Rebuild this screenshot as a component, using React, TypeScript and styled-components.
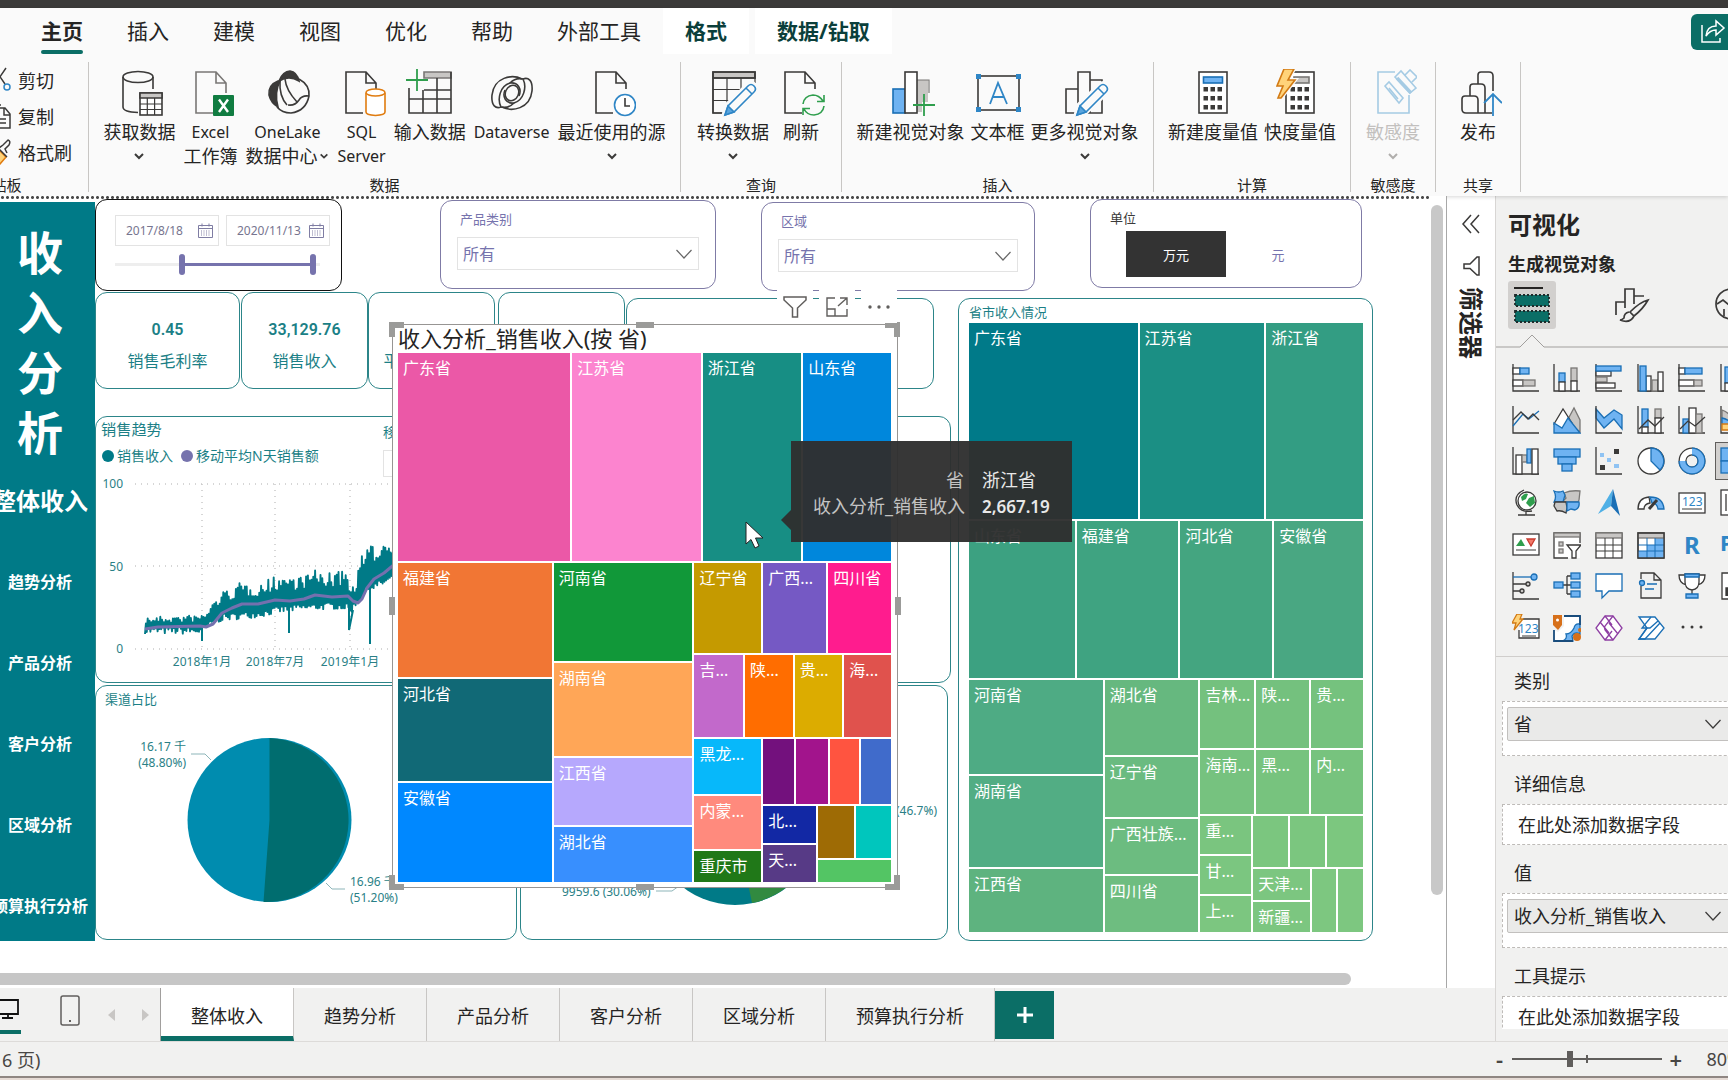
import React from "react";
import styled, { createGlobalStyle } from "styled-components";

const K = "#3b3a39";
const BF = "#6fb3f2";
const BS = "#1a6fb5";
const GF = "#c8c6c4";
const GS = "#797775";
const ACCENT = "#0b6e66";
const TEAL = "#007a87";
const LINE = "#2c8589";
const PURPLE = "#7673ad";

const Global = createGlobalStyle`
  * { box-sizing: border-box; }
  body {
    margin: 0;
    overflow: hidden;
    font-family: "Noto Sans", "Noto Sans CJK SC", sans-serif;
    color: #252423;
    background: #fff;
  }
  button, input, select { font: inherit; color: inherit; border: 0; padding: 0; margin: 0; background: none; border-radius: 0; }
  svg { display: block; flex: none; }
  p, h1, h2, h3 { margin: 0; font-weight: 400; }
`;

/* ---------- shell ---------- */
const Shell = styled.div`
  height: 100vh;
  display: flex;
  flex-direction: column;
`;
const TitleStrip = styled.div`
  height: 8px;
  background: #3b3a39;
  flex: none;
`;
const Header = styled.header`
  background: #fafafa;
  flex: none;
  position: relative;
  box-shadow: 0 1px 4px rgba(0, 0, 0, 0.16);
`;
const Menu = styled.nav`
  height: 46px;
  display: flex;
  padding-left: 19px;
`;
const MenuTab = styled.button<{ $on?: boolean; $ctx?: boolean }>`
  position: relative;
  padding: 0 22px;
  font-size: 21px;
  line-height: 46px;
  white-space: nowrap;
  font-weight: ${(p) => (p.$on || p.$ctx ? 700 : 400)};
  color: ${(p) => (p.$ctx ? "#0b3f3b" : "#252423")};
  background: ${(p) => (p.$ctx ? "#fff" : "none")};
  margin-right: ${(p) => (p.$ctx ? 6 : 0)}px;
  &::after {
    content: "";
    display: ${(p) => (p.$on ? "block" : "none")};
    position: absolute;
    left: 22px;
    right: 22px;
    bottom: 0;
    height: 4px;
    border-radius: 2px;
    background: ${ACCENT};
  }
`;
const ShareButton = styled.button`
  margin: 6px -8px 0 auto;
  width: 45px;
  height: 36px;
  padding-left: 9px;
  border-radius: 6px;
  background: ${ACCENT};
`;
const Ribbon = styled.div`
  height: 142px;
  display: flex;
  padding-top: 8px;
`;
const Group = styled.section<{ $w: number; $cut?: number }>`
  width: ${(p) => p.$w}px;
  margin-left: ${(p) => -(p.$cut || 0)}px;
  height: 130px;
  flex: none;
  display: flex;
  flex-direction: column;
  border-right: 1px solid #c8c6c4;
`;
const GroupBody = styled.div<{ $gap: number }>`
  flex: 1;
  display: flex;
  justify-content: center;
  align-items: flex-start;
  gap: ${(p) => p.$gap}px;
  padding-top: 7px;
`;
const GroupName = styled.h2`
  font-size: 15px;
  line-height: 20px;
  height: 17px;
  text-align: center;
`;
const Tool = styled.button<{ $off?: boolean }>`
  display: flex;
  flex-direction: column;
  align-items: center;
  white-space: nowrap;
  color: ${(p) => (p.$off ? "#c2c0be" : "#252423")};
  > svg { margin-bottom: 3px; }
`;
const ToolLine = styled.span<{ $latin?: boolean }>`
  display: flex;
  align-items: center;
  gap: 2px;
  font-size: ${(p) => (p.$latin ? 16 : 18)}px;
  line-height: 24px;
  height: 24px;
`;
const ClipList = styled.div`
  display: flex;
  flex-direction: column;
  padding: 0 0 0 75px;
  height: 113px;
`;
const ClipButton = styled.button`
  height: 36px;
  display: flex;
  align-items: center;
  gap: 7px;
  font-size: 18px;
  white-space: nowrap;
`;
const Body = styled.div`
  flex: 1;
  display: flex;
  min-height: 0;
`;
const LeftSide = styled.div`
  flex: 1;
  min-width: 0;
  display: flex;
  flex-direction: column;
`;
const Work = styled.div`
  flex: 1;
  min-height: 0;
  display: flex;
`;
const Canvas = styled.main`
  flex: 1;
  min-width: 0;
  position: relative;
  overflow: hidden;
  background: #fff;
  border-right: 1px solid #a8a8a8;
  display: flex;
  flex-direction: column;
`;
const SelectionDots = styled.div`
  height: 3px;
  flex: none;
  margin-right: 17px;
  background: radial-gradient(circle, #4a4a4a 0 1px, transparent 2px) 0 0 / 5px 3px repeat-x;
`;
const CanvasRow = styled.div`
  flex: 1;
  min-height: 0;
  display: flex;
  justify-content: space-between;
`;
const VScroll = styled.div`
  width: 12px;
  height: 690px;
  margin: 6px 3px 0 0;
  border-radius: 6px;
  background: #c8c8c8;
`;
const HScroll = styled.div`
  height: 12px;
  flex: none;
  margin: 0 95px 3px 0;
  border-radius: 0 6px 6px 0;
  background: #c6c6c6;
`;

/* ---------- report page ---------- */
const Report = styled.div`
  display: flex;
  margin-left: -15px;
`;
const SideNav = styled.nav`
  width: 110px;
  height: 739px;
  margin-top: 3px;
  background: ${TEAL};
  color: #fff;
  font-weight: 700;
  display: flex;
  flex-direction: column;
  align-items: center;
  padding-top: 20px;
`;
const SideTitle = styled.h1`
  width: 46px;
  font-size: 46px;
  line-height: 60px;
  font-weight: 700;
  margin-bottom: 18px;
`;
const SideLink = styled.a<{ $on?: boolean }>`
  color: #fff;
  text-decoration: none;
  white-space: nowrap;
  font-size: ${(p) => (p.$on ? 24 : 16)}px;
  line-height: 42px;
  margin-bottom: 39px;
`;
const Content = styled.div`
  display: flex;
  flex-direction: column;
`;
const Filters = styled.div`
  display: flex;
  align-items: flex-start;
  height: 93px;
`;
const Slicer = styled.div<{ $w: number; $h?: number; $gap?: number; $top?: number; $c?: string }>`
  width: ${(p) => p.$w}px;
  height: ${(p) => p.$h || 89}px;
  margin-left: ${(p) => p.$gap || 0}px;
  margin-top: ${(p) => p.$top || 0}px;
  border: 1px solid ${(p) => p.$c || "#7f7ba6"};
  border-radius: 12px;
  padding: 0 16px;
  background: #fff;
`;
const Dates = styled.div`
  display: flex;
  gap: 7px;
  padding: 15px 0 0 3px;
`;
const DateBox = styled.label`
  width: 104px;
  flex: none;
  height: 31px;
  border: 1px solid #e3e3e3;
  display: flex;
  align-items: center;
  justify-content: space-between;
  padding: 0 5px 0 10px;
  color: #77758f;
  font-size: 12px;
  input { width: 68px; line-height: 20px; }
`;
const RangePair = styled.div`
  display: grid;
  width: 205px;
  margin: 8px 0 0 3px;
`;
const RangeInput = styled.input<{ $track?: boolean }>`
  grid-area: 1 / 1;
  appearance: none;
  width: 205px;
  height: 21px;
  pointer-events: none;
  background: ${(p) =>
    p.$track
      ? `linear-gradient(${PURPLE}, ${PURPLE}) 66px 9px / 132px 3px no-repeat, linear-gradient(#eeeeee, #eeeeee) 0 9px / 205px 3px no-repeat`
      : "none"};
  &::-webkit-slider-thumb {
    appearance: none;
    pointer-events: auto;
    width: 6px;
    height: 21px;
    border-radius: 3px;
    background: ${PURPLE};
  }
`;
const SlicerTitle = styled.label<{ $dark?: boolean }>`
  display: block;
  padding-left: 3px;
  margin-top: 8px;
  font-size: 13px;
  line-height: 20px;
  color: ${(p) => (p.$dark ? K : PURPLE)};
`;
const SelectBox = styled.div`
  display: flex;
  align-items: center;
  height: 33px;
  margin-top: 8px;
  border: 1px solid #e3e3e3;
  padding-right: 5px;
  select {
    appearance: none;
    flex: 1;
    height: 31px;
    padding-left: 5px;
    font-size: 16px;
    color: ${PURPLE};
  }
`;
const UnitButtons = styled.div`
  display: flex;
  padding: 3px 0 0 19px;
  gap: 2px;
`;
const UnitButton = styled.button<{ $on?: boolean }>`
  width: 100px;
  height: 46px;
  font-size: 13px;
  color: ${(p) => (p.$on ? "#fff" : PURPLE)};
  background: ${(p) => (p.$on ? "#333" : "none")};
`;
const Lower = styled.div`
  display: flex;
  gap: 7px;
`;
const LeftCol = styled.div`
  width: 856px;
`;
const Cards = styled.div`
  display: flex;
  align-items: flex-start;
  height: 124px;
`;
const Card = styled.div<{ $w: number; $gap?: number; $low?: boolean }>`
  width: ${(p) => p.$w}px;
  height: ${(p) => (p.$low ? 91 : 97)}px;
  margin-left: ${(p) => p.$gap || 0}px;
  margin-top: ${(p) => (p.$low ? 6 : 0)}px;
  border: 1px solid ${LINE};
  border-radius: 12px;
  color: #1b7f86;
  text-align: center;
  white-space: nowrap;
  padding-top: 25px;
`;
const CardValue = styled.p`
  font-size: 16px;
  line-height: 24px;
  height: 24px;
  font-weight: 600;
  font-family: "Roboto", "Noto Sans", sans-serif;
`;
const CardName = styled.p`
  font-size: 16px;
  line-height: 24px;
  margin-top: 7px;
`;
const Panel = styled.section<{ $w?: number; $h: number }>`
  width: ${(p) => (p.$w ? p.$w + "px" : "auto")};
  height: ${(p) => p.$h}px;
  border: 1px solid ${LINE};
  border-radius: 12px;
  overflow: hidden;
  color: #1b7f86;
`;
const PanelTitle = styled.h3`
  font-size: 13px;
  line-height: 20px;
  padding-left: 9px;
  padding-top: 3px;
  margin-bottom: 1px;
`;
const TrendHead = styled.div`
  display: flex;
  height: 57px;
  padding: 2px 5px 0;
`;
const TrendTitles = styled.div`
  width: 282px;
  font-size: 13px;
  line-height: 20px;
`;
const Legend = styled.div`
  display: flex;
  align-items: center;
  gap: 3px;
  margin-top: 6px;
  font-size: 14px;
  line-height: 22px;
  white-space: nowrap;
`;
const Dot = styled.i<{ $c: string; $next?: boolean }>`
  width: 12px;
  height: 12px;
  margin-left: ${(p) => (p.$next ? 5 : 1)}px;
  border-radius: 50%;
  background: ${(p) => p.$c};
`;
const WindowBox = styled.label`
  font-size: 13px;
  line-height: 26px;
  input { display: block; width: 120px; height: 27px; margin-top: 5px; border: 1px solid #e3e3e3; }
`;
const BottomRow = styled.div`
  display: flex;
  gap: 3px;
  margin-top: 2px;
`;
const ChartText = styled.text`
  font-size: 12px;
  fill: #2a7f86;
`;
const Province = styled(Panel)`
  margin-top: 6px;
  padding: 0 9px 8px 10px;
  display: flex;
  flex-direction: column;
`;
const ProvinceTitle = styled.h3`
  font-size: 13px;
  line-height: 20px;
  height: 24px;
  padding-top: 3px;
`;

/* ---------- treemap ---------- */
type Node = { s: number; t?: string; c?: string; d?: "row" | "column"; k?: Node[] };
const Split = styled.div<{ $d: string; $s: number }>`
  display: flex;
  flex-direction: ${(p) => p.$d};
  flex: ${(p) => p.$s} 1 0;
  gap: 2px;
  min-width: 0;
  min-height: 0;
`;
const Tile = styled.div<{ $s: number; $c: string }>`
  flex: ${(p) => p.$s} 1 0;
  min-width: 0;
  min-height: 0;
  text-indent: 5px;
  overflow: hidden;
  white-space: nowrap;
  font-size: 16px;
  line-height: 30px;
  color: #fff;
  background: ${(p) => p.$c};
`;
const Tree = ({ n }: { n: Node }) =>
  n.k ? (
    <Split $d={n.d || "row"} $s={n.s}>
      {n.k.map((c, i) => (
        <Tree key={i} n={c} />
      ))}
    </Split>
  ) : (
    <Tile $s={n.s} $c={n.c || "#ccc"}>
      {n.t}
    </Tile>
  );
const L = (s: number, c: string, t?: string): Node => ({ s, c, t });
const R = (s: number, k: Node[]): Node => ({ s, d: "row", k });
const C = (s: number, k: Node[]): Node => ({ s, d: "column", k });

const greenMap = C(1, [
  R(196, [L(169, "#007a89", "广东省"), L(125, "#1b8f84", "江苏省"), L(97, "#339d83", "浙江省")]),
  R(157, [L(106, "#3ca181", "山东省"), L(102, "#3fa381", "福建省"), L(92, "#44a580", "河北省"), L(89, "#49a782", "安徽省")]),
  R(252, [
    C(134, [L(94, "#4eab84", "河南省"), L(90, "#52ad84", "湖南省"), L(63, "#5eb37f", "江西省")]),
    C(94, [L(75, "#66b87f", "湖北省"), L(60, "#6abb80", "辽宁省"), L(55, "#6cbc80", "广西壮族..."), L(56, "#6ebd80", "四川省")]),
    C(163, [
      R(68, [L(54, "#74c17e", "吉林..."), L(53, "#74c17e", "陕..."), L(52, "#75c27e", "贵...")]),
      R(64, [L(54, "#76c27f", "海南..."), L(53, "#77c37e", "黑..."), L(52, "#77c37e", "内...")]),
      R(116, [
        C(51, [L(38, "#7ac57f", "重..."), L(38, "#7bc680", "甘..."), L(36, "#7cc680", "上...")]),
        C(110, [
          R(51, [L(35, "#7bc67f"), L(36, "#7bc67f"), L(36, "#7cc77f")]),
          R(63, [C(57, [L(31, "#7cc680", "天津..."), L(30, "#7cc680", "新疆...")]), L(25, "#7dc780"), L(25, "#7dc780")]),
        ]),
      ]),
    ]),
  ]),
]);

const colorMap = C(1, [
  R(208, [L(173, "#eb58a7", "广东省"), L(129, "#fc84cf", "江苏省"), L(99, "#178e84", "浙江省"), L(88, "#0087dc", "山东省")]),
  R(319, [
    C(154, [L(114, "#f17634", "福建省"), L(103, "#116976", "河北省"), L(99, "#0088ff", "安徽省")]),
    C(139, [L(98, "#119839", "河南省"), L(94, "#ffa657", "湖南省"), L(67, "#b6a8fd", "江西省"), L(55, "#388ffe", "湖北省")]),
    C(197, [
      R(91, [L(67, "#c59a00", "辽宁省"), L(63, "#7559c4", "广西..."), L(63, "#ff1c8e", "四川省")]),
      R(82, [L(49, "#c269cb", "吉..."), L(48, "#ff6d00", "陕..."), L(48, "#dcac00", "贵..."), L(47, "#e0524d", "海...")]),
      R(144, [
        C(67, [L(55, "#07b8fa", "黑龙..."), L(54, "#ff8a7d", "内蒙..."), L(31, "#207818", "重庆市")]),
        C(128, [
          R(66, [L(31, "#73117d"), L(31, "#a2148c"), L(29, "#ff5440"), L(30, "#406bcb")]),
          R(76, [
            C(53, [L(37, "#1228a4", "北..."), L(37, "#573a86", "天...")]),
            C(73, [R(52, [L(36, "#9e6b05"), L(35, "#00c6bd")]), L(22, "#53c564")]),
          ]),
        ]),
      ]),
    ]),
  ]),
]);

/* ---------- selected visual, its handles and tooltip ---------- */
const Selected = styled.section`
  position: absolute;
  left: 392px;
  top: 128px;
  width: 506px;
  height: 564px;
  display: flex;
  flex-direction: column;
  padding: 0 6px 5px 5px;
  background: #fff;
  border: 1px solid #979593;
`;
const SelectedTitle = styled.h2`
  font-size: 22px;
  line-height: 26px;
  height: 28px;
  white-space: nowrap;
`;
const Handle = styled.i<{ $x: string; $y: string }>`
  position: absolute;
  left: ${(p) => ({ l: "-4px", m: "calc(50% - 9px)", r: "calc(100% - 2px)" })[p.$x]};
  top: ${(p) => ({ t: "-3px", m: "calc(50% - 9px)", b: "calc(100% - 3px)" })[p.$y]};
  width: ${(p) => (p.$x === "m" ? 18 : 6)}px;
  height: ${(p) => (p.$y === "m" ? 18 : 6)}px;
  background: #9b9b99;
`;
const Corner = styled.i<{ $r?: boolean; $b?: boolean }>`
  position: absolute;
  width: 15px;
  height: 15px;
  ${(p) => (p.$r ? "right: -3px; border-right" : "left: -4px; border-left")}: 6px solid #9b9b99;
  ${(p) => (p.$b ? "bottom: -3px; border-bottom" : "top: -3px; border-top")}: 6px solid #9b9b99;
`;
const VisualTools = styled.div`
  position: absolute;
  right: 0;
  bottom: calc(100% + 2px);
  display: flex;
  gap: 6px;
`;
const VisualTool = styled.button`
  width: 36px;
  height: 33px;
  display: flex;
  align-items: center;
  justify-content: center;
  background: #fff;
`;
const Tooltip = styled.dl`
  position: absolute;
  left: 791px;
  top: 245px;
  width: 281px;
  height: 101px;
  margin: 0;
  padding: 26px 20px 0 22px;
  display: grid;
  grid-template-columns: 151px 1fr;
  column-gap: 18px;
  grid-auto-rows: 26px;
  align-content: start;
  font-size: 18px;
  line-height: 26px;
  white-space: nowrap;
  color: #e8e8e8;
  background: rgba(47, 47, 47, 0.96);
  &::before {
    content: "";
    position: absolute;
    left: -10px;
    top: 69px;
    border: 10px solid transparent;
    border-left: 0;
    border-right-color: rgba(47, 47, 47, 0.96);
  }
  dt { text-align: right; color: #c3c3c3; }
  dd { margin: 0; }
  dd b { font-size: 17px; font-weight: 600; }
`;
const Pointer = styled.svg`
  position: absolute;
  left: 744px;
  top: 325px;
`;

/* ---------- filters strip ---------- */
const FilterStrip = styled.aside`
  width: 48px;
  flex: none;
  display: flex;
  flex-direction: column;
  align-items: center;
  padding-top: 18px;
  background: #fff;
`;
const StripButton = styled.button`
  height: 42px;
  display: flex;
`;
const StripTitle = styled.h2`
  writing-mode: vertical-rl;
  text-orientation: sideways;
  font-size: 24px;
  line-height: 32px;
  font-weight: 700;
  margin-top: 11px;
`;

/* ---------- visualizations pane ---------- */
const Pane = styled.aside`
  width: 233px;
  flex: none;
  overflow: hidden;
  display: flex;
  flex-direction: column;
  background: #f1f1f0;
  border-left: 1px solid #d8d6d4;
  white-space: nowrap;
`;
const PaneTitle = styled.h2`
  font-size: 24px;
  line-height: 34px;
  font-weight: 700;
  margin: 12px 0 0 12px;
`;
const PaneSub = styled.h3`
  font-size: 18px;
  line-height: 26px;
  font-weight: 600;
  margin: 9px 0 4px 12px;
`;
const PaneTabs = styled.div`
  display: flex;
  gap: 52px;
  padding-left: 12px;
`;
const PaneTab = styled.button<{ $on?: boolean }>`
  width: 48px;
  height: 48px;
  flex: none;
  display: flex;
  align-items: center;
  justify-content: center;
  border-radius: 3px;
  background: ${(p) => (p.$on ? "#d2d0ce" : "none")};
`;
const VizGrid = styled.div`
  display: grid;
  width: 250px;
  height: 292px;
  grid-template-columns: repeat(6, 1fr);
  grid-template-rows: repeat(7, 1fr);
  margin: 8px 0 7px 9px;
  flex: none;
`;
const VizButton = styled.button<{ $on?: boolean }>`
  display: flex;
  align-items: center;
  justify-content: center;
  margin: 2px;
  border: 1px solid ${(p) => (p.$on ? "#605e5c" : "transparent")};
  background: ${(p) => (p.$on ? "#d2d0ce" : "none")};
`;
const Wells = styled.div`
  border-top: 1px solid #d0cecc;
  padding: 12px 0 0 6px;
  flex: 1;
  min-height: 0;
  overflow: hidden;
  margin-bottom: 12px;
`;
const WellName = styled.h3`
  font-size: 18px;
  line-height: 24px;
  margin: 0 0 8px 12px;
`;
const Well = styled.div<{ $full?: boolean }>`
  height: ${(p) => (p.$full ? 55 : 41)}px;
  width: 260px;
  margin-bottom: 16px;
  padding: ${(p) => (p.$full ? "5px 4px" : "6px 15px")};
  font-size: 18px;
  line-height: 28px;
  background: #fff;
  border: 1px dashed #bebbb8;
`;
const Chip = styled.div`
  height: 34px;
  display: flex;
  align-items: center;
  justify-content: space-between;
  padding: 0 34px 0 6px;
  border: 1px solid #c2c0be;
  border-radius: 2px;
  background: #eaeae9;
`;

/* ---------- page tabs + status ---------- */
const PageBar = styled.nav`
  height: 53px;
  flex: none;
  display: flex;
  background: #f1f1f0;
`;
const ViewButton = styled.button<{ $on?: boolean }>`
  width: ${(p) => (p.$on ? 21 : 24)}px;
  margin-right: ${(p) => (p.$on ? 37 : 13)}px;
  height: 46px;
  display: flex;
  justify-content: center;
  padding-top: 7px;
  border-bottom: ${(p) => (p.$on ? "4px solid " + ACCENT : "0")};
`;
const Step = styled.button`
  width: 33px;
  height: 53px;
  display: flex;
  align-items: center;
  justify-content: center;
`;
const PageTab = styled.button<{ $on?: boolean }>`
  padding: ${(p) => (p.$on ? "5px" : "0")} 30px 0;
  font-size: 18px;
  white-space: nowrap;
  border-right: 1px solid #c8c6c4;
  border-bottom: ${(p) => (p.$on ? "5px solid " + ACCENT : "0")};
  background: ${(p) => (p.$on ? "#fff" : "none")};
  box-shadow: ${(p) => (p.$on ? "-1px 0 #a19f9d" : "none")};
`;
const AddPage = styled.button`
  width: 59px;
  height: 48px;
  margin-top: 3px;
  display: flex;
  align-items: center;
  justify-content: center;
  background: ${ACCENT};
`;
const Status = styled.footer`
  height: 39px;
  flex: none;
  display: flex;
  align-items: center;
  justify-content: space-between;
  padding: 0 0 5px 2px;
  font-size: 18px;
  color: #484644;
  overflow: hidden;
  background: linear-gradient(#8f8682, #8f8682) 0 34px / 100% 2px no-repeat, linear-gradient(#e6dbd5, #e6dbd5) 0 36px / 100% 3px no-repeat, #f1f1f0;
  border-top: 1px solid #dddbd9;
`;
const Zoom = styled.div`
  display: flex;
  align-items: center;
  margin-right: -14px;
  gap: 7px;
`;
const ZoomButton = styled.button`
  font-size: 22px;
  line-height: 24px;
  width: 12px;
  font-weight: 600;
`;
const ZoomRange = styled.input`
  appearance: none;
  width: 150px;
  height: 18px;
  background: linear-gradient(#605e5c, #605e5c) 0 8px / 150px 2px no-repeat, linear-gradient(#605e5c, #605e5c) 74px 5px / 2px 8px no-repeat;
  &::-webkit-slider-thumb { appearance: none; width: 6px; height: 16px; background: #605e5c; }
`;
const ZoomText = styled.span`
  margin-left: 18px;
`;

/* ---------- drawings ---------- */
const Chev = ({ s = 12, c = K, w = 2 }: { s?: number; c?: string; w?: number }) => (
  <svg width={s} height={s} viewBox="0 0 12 12" fill="none" stroke={c} strokeWidth={w}>
    <path d="M2 4l4 4 4-4" />
  </svg>
);
const WideChev = ({ c = "#666" }: { c?: string }) => (
  <svg width="18" height="12" viewBox="0 0 18 12" fill="none" stroke={c} strokeWidth="1.2">
    <path d="M1.500 2l7.500 8 7.500-8" />
  </svg>
);
const Ico = ({ children, size = 48 }: { children: React.ReactNode; size?: number }) => (
  <svg width={size} height={size} viewBox={`0 0 ${size} ${size}`} fill="none" stroke={K} strokeWidth="1.6">
    {children}
  </svg>
);
const Doc = ({ c = K }: { c?: string }) => (
  <path d="M25 44H8V3H28L38 14V20M28 3V14H38" stroke={c} fill="none" />
);
const Pencil = () => (
  <g>
    <path d="M15 47L17 37L39 16Q43 13 46 17Q49 20 45 24L24 44Z" fill="#fafafa" stroke="#fafafa" strokeWidth="5" />
    <path d="M16 46L19 37L39 17Q42 14 45 17Q48 20 45 23L25 43ZM37 19L43 25" stroke="#2f86c6" fill="#fafafa" />
    <path d="M16 46L19 37L25 43Z" fill="#5aa5de" stroke="#2f86c6" />
  </g>
);
const CalcDots = ({ x, y }: { x: number; y: number }) => (
  <g fill={K} stroke="none">
    {[0, 1, 2].map((r) => [0, 1, 2].map((c) => <rect key={`${r}${c}`} x={x + c * 7} y={y + r * 9} width="4.500" height="4.500" />))}
  </g>
);
const BOLT = "M8 0H18L12 11H19L5 29H2L7 17H1Z";

const icons: Record<string, React.ReactNode> = {
  getData: (
    <Ico>
      <ellipse cx="23" cy="8" rx="15" ry="5.500" />
      <path d="M8 8V38Q8 43 23 43.500M38 8V20" />
      <rect x="25" y="24" width="22" height="22" fill="#fff" />
      <path d="M25 24H47V29H25Z" fill={GF} />
      <path d="M25 35H47M25 40.500H47M32.300 29V46M39.600 29V46" strokeWidth="1.200" />
    </Ico>
  ),
  excel: (
    <Ico>
      <path d="M27 44H10V3H30L40 14V24M30 3V14H40" stroke={GS} />
      <rect x="27" y="26" width="21" height="21" rx="1" fill="#107c41" stroke="none" />
      <path d="M33 30.500L42 43M42 30.500L33 43" stroke="#fff" strokeWidth="2.400" />
    </Ico>
  ),
  onelake: (
    <Ico>
      <path d="M16 12Q20 2 27 2Q34 3 36 12Q26 6 16 12Z" fill={K} />
      <path d="M15 12Q5 16 6 26Q8 34 15 38Q11 24 17 12Z" fill={K} />
      <path d="M36 10Q47 16 46 27Q43 42 28 44Q19 44 14 38M17 12Q16 27 24 36M22 10Q23 21 34 33M46 27Q39 26 36 31Q32 37 25 36" />
    </Ico>
  ),
  sql: (
    <Ico>
      <Doc />
      <path d="M28 24V43Q28 46 37.500 46.500Q47 46 47 43V24" fill="#fff" stroke="#e07c10" />
      <ellipse cx="37.500" cy="23.500" rx="9.500" ry="3.500" fill="#fff" stroke="#e07c10" />
    </Ico>
  ),
  table: (
    <Ico>
      <path d="M18 3H45V9H18Z" fill={GF} stroke={GS} />
      <path d="M3 19V44H45V3M3 30H45M18 21H45M17 21V44M31 9V44" />
      <path d="M11 0V22M0 11H22" stroke="#2f9e4d" strokeWidth="1.800" />
    </Ico>
  ),
  dataverse: (
    <Ico>
      <path d="M34 10C24 5 6 8 4 26C3 37 8 40 13 38C9 30 12 17 22 14C30 13 34 20 31 27" />
      <path d="M14 38C24 43 42 40 44 22C45 11 40 8 35 10C39 18 36 31 26 34C18 35 14 28 17 21" />
      <path d="M13 38C17 39 22 38 26 34M35 10C31 9 26 10 22 14" />
      <ellipse cx="24" cy="24" rx="6.500" ry="8" transform="rotate(25 24 24)" />
    </Ico>
  ),
  recent: (
    <Ico>
      <Doc />
      <circle cx="37" cy="36" r="10.500" fill="#fff" stroke="#2f86c6" />
      <path d="M37 29V37H42" stroke={K} />
    </Ico>
  ),
  transform: (
    <Ico>
      <path d="M4 3H46V9H4Z" fill={GF} />
      <path d="M4 9V44H18M46 9V14M4 20.500H34M4 31.500H24M18 9V36M32 9V22" strokeWidth="1.200" />
      <path d="M4 3H46V9H4ZM4 9V44H18" />
      <Pencil />
    </Ico>
  ),
  refresh: (
    <Ico>
      <Doc />
      <path d="M26 35Q27 27 36 26Q42 26 46 32M47 26V32.500H40M47 37Q46 45 37 46Q30 46 27 40M26 46V39.500H33" stroke="#2f9e4d" />
    </Ico>
  ),
  newVisual: (
    <Ico>
      <rect x="30" y="11" width="11" height="22" fill={GF} stroke="none" />
      <rect x="30" y="11" width="5" height="32" fill={GF} stroke="none" />
      <path d="M30 11H42V24" stroke={GS} strokeWidth="1.200" />
      <rect x="6" y="20" width="12" height="24" fill={BF} stroke={BS} />
      <rect x="18" y="3" width="12" height="41" fill="#fff" />
      <path d="M37 25V47M26 36H48" stroke="#2f9e4d" strokeWidth="1.800" />
    </Ico>
  ),
  textbox: (
    <Ico>
      <rect x="4" y="7" width="41" height="34" />
      <path d="M16 35L24 14L33 35M19 28H30" stroke="#2f86c6" strokeWidth="1.800" />
      <g fill="#2f86c6" stroke="none">
        <rect x="2" y="5" width="5" height="5" />
        <rect x="42" y="5" width="5" height="5" />
        <rect x="2" y="38" width="5" height="5" />
        <rect x="42" y="38" width="5" height="5" />
      </g>
    </Ico>
  ),
  moreVisual: (
    <Ico>
      <path d="M5 20H17V44H5ZM17 3H29V44H17ZM29 11H41V44H29" />
      <Pencil />
    </Ico>
  ),
  calc: (
    <Ico>
      <rect x="10" y="3" width="28" height="41" fill="#fff" />
      <rect x="14.500" y="8" width="19" height="6" fill={BF} stroke={BS} />
      <CalcDots x={14.500} y={18} />
    </Ico>
  ),
  quick: (
    <Ico>
      <rect x="10" y="3" width="28" height="41" fill="#fff" />
      <rect x="18" y="8" width="15" height="6" fill={GF} stroke={GS} />
      <CalcDots x={14.500} y={18} />
      <path d={BOLT} fill="#ffd37a" stroke="#fafafa" strokeWidth="4" />
      <path d={BOLT} fill="#ffd37a" stroke="#d27a14" />
    </Ico>
  ),
  sensitivity: (
    <Ico>
      <g stroke="#a5cbe4">
        <path d="M26 3H9V44H40V26" />
        <path d="M16 17L20 13L34 29L30 34ZM20 19L29 30" fill="#fafafa" />
        <path d="M26 8L32 2L47 19L41 24ZM36 6L41 1L48 8L43 13" fill="#fafafa" />
        <path d="M28 9L42 24" strokeWidth="3.500" />
      </g>
    </Ico>
  ),
  publish: (
    <Ico>
      <path d="M31 44H12Q8 44 8 40V30Q8 27 11 27H20Q24 27 24 31V44M16 27V18Q16 15 19 15H27Q31 15 31 19V44M24 15V6Q24 3 27 3H35Q39 3 39 7V22M31 44H38" />
      <path d="M39 47V25M30 34L39 25L48 34" stroke="#2f86c6" strokeWidth="1.800" />
    </Ico>
  ),
};

const Axis = () => <path d="M1 0V27H27" />;
const Rb = ({ a, c = "w" }: { a: number[]; c?: string }) => (
  <rect
    x={a[0]}
    y={a[1]}
    width={a[2]}
    height={a[3]}
    fill={c === "b" ? BF : c === "g" ? GF : "#fff"}
    stroke={c === "b" ? BS : c === "g" ? GS : K}
  />
);
const viz: [string, React.ReactNode][] = [
  ["堆积条形图", <><Axis /><Rb a={[1, 4, 7, 6]} /><Rb c="b" a={[8, 4, 9, 6]} /><Rb a={[1, 16, 10, 6]} /><Rb c="g" a={[11, 16, 12, 6]} /></>],
  ["堆积柱形图", <><Axis /><Rb c="b" a={[6, 9, 6, 9]} /><Rb a={[6, 18, 6, 9]} /><Rb c="g" a={[18, 4, 6, 13]} /><Rb a={[18, 17, 6, 10]} /></>],
  ["簇状条形图", <><Axis /><Rb a={[1, 7, 15, 5]} /><Rb c="g" a={[1, 13, 11, 5]} /><Rb a={[1, 19, 19, 5]} /><Rb c="b" a={[1, 2, 25, 5]} /></>],
  ["簇状柱形图", <><Axis /><Rb a={[9, 12, 5, 15]} /><Rb c="g" a={[15, 16, 6, 11]} /><Rb a={[21, 8, 5, 19]} /><Rb c="b" a={[3, 2, 6, 25]} /></>],
  ["百分比堆积条形图", <><Axis /><Rb a={[1, 4, 6, 6]} /><Rb c="b" a={[7, 4, 17, 6]} /><Rb a={[1, 16, 15, 6]} /><Rb c="g" a={[16, 16, 8, 6]} /></>],
  ["百分比堆积柱形图", <><Axis /><Rb c="b" a={[5, 3, 6, 16]} /><Rb a={[5, 19, 6, 8]} /></>],
  ["折线图", <><Axis /><path d="M1 20L11 8L17 13L27 5" stroke={BS} /><path d="M1 14L9 6L16 13L21 8L27 14" /></>],
  ["分区图", <><path d="M14 15L21 2L27 14V26Z" fill={GF} stroke={GS} /><path d="M1 18L10 3L19 17L9 24Z" fill="#fff" /><path d="M1 17L9 22L15 12L27 27H1Z" fill={BF} stroke={BS} /></>],
  ["堆积面积图", <><path d="M1 3L9 12L19 4L27 9V23L19 13L9 22L1 12Z" fill={BF} stroke={BS} /><Axis /></>],
  ["折线和堆积柱形图", <><Axis /><Rb c="b" a={[5, 3, 6, 18]} /><Rb a={[5, 21, 6, 6]} /><Rb c="g" a={[18, 3, 6, 9]} /><Rb a={[18, 12, 6, 15]} /><path d="M2 23L11 14L18 20L27 11" /></>],
  ["折线和簇状柱形图", <><Axis /><Rb c="b" a={[5, 13, 6, 14]} /><Rb a={[11, 2, 7, 25]} /><Rb c="g" a={[18, 8, 6, 19]} /><path d="M2 23L10 15L17 20L27 11" /></>],
  ["功能区图", <><Axis /><path d="M2 4Q8 6 12 12L27 8V16L12 18Q6 16 2 14Z" fill={GF} stroke={GS} /><path d="M2 12Q8 13 12 18L27 14V20L12 22L2 18Z" fill={BF} stroke={BS} /><path d="M2 18H12V24H2Z" fill="#ffd37a" stroke="#d27a14" /></>],
  ["瀑布图", <><Axis /><Rb a={[4, 8, 6, 19]} /><Rb c="g" a={[10, 8, 5, 7]} /><Rb c="b" a={[15, 2, 4, 14]} /><Rb a={[20, 2, 6, 25]} /></>],
  ["漏斗图", <><Rb c="b" a={[1, 2, 26, 8]} /><Rb c="b" a={[5, 10, 18, 7]} /><Rb c="b" a={[9, 17, 10, 7]} /></>],
  ["散点图", <><Axis /><g stroke="none"><path d="M19 2h5v5h-5zM5 18h5v5h-5z" fill={K} /><path d="M5 6h4v4h-4zM12 11h4v4h-4zM19 17h5v4h-5z" fill="#8fc3f3" /></g></>],
  ["饼图", <><circle cx="14" cy="14" r="13" fill="#fff" /><path d="M14 1A13 13 0 0 1 23 23L14 14Z" fill={BF} stroke={BS} /></>],
  ["环形图", <><circle cx="14" cy="14" r="9.500" stroke={K} strokeWidth="8" /><circle cx="14" cy="14" r="9.500" stroke="#fff" strokeWidth="5.500" /><path d="M14 4.500A9.500 9.500 0 1 1 4.500 14" stroke={BS} strokeWidth="8" /><path d="M14 4.500A9.500 9.500 0 1 1 4.500 14" stroke={BF} strokeWidth="5.500" /></>],
  ["树状图", <><Rb c="b" a={[1, 1, 12, 13]} /><Rb c="b" a={[1, 14, 12, 12]} /><Rb a={[13, 1, 13, 25]} /></>],
  ["地图", <><circle cx="15" cy="12" r="9" fill="#fff" /><path d="M9 8Q13 3 16 5L14 10L10 12ZM17 9L22 7L23 14L18 18L14 14Z" fill="#2f9e4d" stroke="none" /><path d="M12 1Q1 6 5 16Q9 24 20 22M14 22V26M6 26H23" /></>],
  ["着色地图", <><path d="M11 4Q18 1 27 2L26 11L25 13H12L10 12L13 9Z" fill={GF} stroke={GS} /><path d="M1 2Q6 4 10 2L12 6L10 13H1Q4 8 1 2Z" fill={BF} stroke={BS} /><path d="M2 13H13L14 19L13 24Q8 21 4 22L1 17Z" fill={GF} stroke={K} /><path d="M14 13H26Q27 19 22 21L18 20L14 22Z" fill={BF} stroke={BS} /></>],
  ["Azure 地图", <g stroke="none"><path d="M18 0L3 25L16 17Z" fill="#4fb0e6" /><path d="M18 0L16 17L25 27Z" fill="#1a6fb5" /></g>],
  ["仪表", <><path d="M1 20Q1 9 12 8L13 14Q7 15 7 20Z" fill="#fff" /><path d="M13 8Q26 8 27 20H21Q20 14 15 14Z" fill={BF} stroke={BS} /><path d="M12 20L20 11" strokeWidth="3" /></>],
  ["卡片图", <><rect x="1" y="4" width="26" height="20" fill="#fff" /><text x="4" y="17" fontSize="12" fill="#2f86c6" stroke="none">123</text><path d="M4 20H24" strokeWidth="1" /></>],
  ["多行卡", <><rect x="1" y="1" width="26" height="25" fill="#fff" /><path d="M6 5V22" /></>],
  ["KPI", <><rect x="1" y="3" width="26" height="21" fill="#fff" /><path d="M4 15L9 8L13 15Z" fill="#2f9e4d" stroke="none" /><path d="M15 8H23L19 15Z" fill="#f47a6a" stroke="#c83a2e" /><path d="M4 19H24" strokeWidth="1" /></>],
  ["切片器", <><rect x="1" y="2" width="26" height="25" fill="#fff" stroke="none" /><path d="M15 27H1V2H27V12" /><Rb c="g" a={[1, 2, 26, 4]} /><Rb c="g" a={[6, 11, 4, 4]} /><Rb c="g" a={[6, 18, 4, 4]} /><path d="M14 14H28L23 20V27H19V20Z" fill="#fff" /></>],
  ["表", <><rect x="1" y="2" width="26" height="25" fill="#fff" /><Rb c="g" a={[1, 2, 26, 5]} /><path d="M1 14H27M1 20H27M10 7V27M18 7V27" strokeWidth="1" /></>],
  ["矩阵", <><rect x="1" y="2" width="26" height="25" fill="#fff" /><path d="M1 20H10V14H18V7H27V27H1Z" fill={BF} stroke="none" /><Rb c="g" a={[1, 2, 26, 5]} /><path d="M1 14H27M1 20H27M10 7V27M18 7V27" stroke={BS} strokeWidth="1" /><path d="M1 2V27H27V2Z" /></>],
  ["R 脚本", <text x="6" y="23" fontSize="24" fontWeight="700" fill="#2f86c6" stroke="none">R</text>],
  ["Python", <text x="0" y="20" fontSize="22" fontWeight="700" fill="#2f86c6" stroke="none">Py</text>],
  ["关键影响者", <><Axis /><path d="M1 5H20" stroke={BS} /><circle cx="22" cy="5" r="3" fill={BF} stroke={BS} /><path d="M1 12H15M1 19H9" /><circle cx="16" cy="12" r="2" fill={GF} /><circle cx="10" cy="19" r="2" fill={GF} /></>],
  ["分解树", <><path d="M10 13H18M14 4V22M14 4H18M14 22H18" /><Rb c="b" a={[1, 10, 9, 6]} /><Rb c="b" a={[18, 1, 9, 6]} /><Rb c="b" a={[18, 10, 9, 6]} /><Rb c="b" a={[18, 19, 9, 6]} /></>],
  ["问答", <path d="M1 2H27V19H14L7 26V19H1Z" fill="#fff" stroke={BS} />],
  ["智能叙述", <><path d="M4 7V1H17L24 8V26H4V14M17 1V8H24" /><circle cx="5" cy="11" r="2.500" fill={BF} stroke={BS} /><path d="M10 12H20M8 17H17" stroke={BS} /></>],
  ["目标", <><path d="M7 2H21V10Q21 17 14 18Q7 17 7 10ZM7 3H1Q1 11 8 13M21 3H27Q27 11 20 13M14 18V22" fill="#fff" /><path d="M7 2H21V5H7ZM8 22H20V26H8Z" fill={BF} stroke={BS} /></>],
  ["分页报表", <><path d="M2 1H20V27H2Z" fill="#fff" /><path d="M6 24V16H10V24" fill={K} /></>],
  ["指标", <><path d="M11 5H27V24H7V16" fill="#fff" /><text x="6" y="19" fontSize="12" fill="#2f86c6" stroke="none">123</text><path d="M10 22H24" strokeWidth="1" /><path d="M5 0H10L8 5H11L2 16L4 9H0Z" fill="#ffd37a" stroke="#d27a14" /></>],
  ["ArcGIS", <><path d="M11 2H27V20Q22 17 19 22L20 27H1V16L5 18L11 12Z" fill="#fff" stroke="none" /><path d="M27 2V10Q22 9 21 14Q18 20 13 20Q15 25 9 27H20L19 22Q22 17 27 20V2Z" fill={BF} stroke={BS} /><path d="M11 2H27V11M20 27H1V16" stroke="#194c7c" strokeWidth="1.800" /><g fill="#d7701a" stroke="none"><path d="M0 1H9V11L5 16L0 11Z" /><circle cx="24" cy="23" r="4" /><circle cx="27" cy="16" r="2" /></g><circle cx="4.500" cy="6" r="1.500" fill="#fff" stroke="none" /></>],
  ["Power Apps", <><path d="M10 2H18L27 14L18 26H10L1 14Z" fill="#fff" stroke="#8e3fa3" /><path d="M18 2L10 12Q9 14 10 16L18 26M10 2L17 11M10 26L17 17M5 8L14 19M23 20L14 9" stroke="#8e3fa3" /></>],
  ["Power Automate", <><path d="M2 3H18L27 14L18 25H2L10 14Z" fill="#fff" stroke={BS} /><path d="M14 3L5 14H13L21 7M10 14L2 25H8L23 9" stroke={BS} /></>],
  ["更多", <g fill={K} stroke="none"><circle cx="5" cy="13" r="1.500" /><circle cx="14" cy="13" r="1.500" /><circle cx="23" cy="13" r="1.500" /></g>],
];

const Calendar = () => (
  <svg width="15" height="15" viewBox="0 0 15 15" fill="none" stroke="#7f7da3">
    <path d="M.5 2.500h14v12H.5zM.5 5.500h14M4 .5v3M11 .5v3" />
    <path d="M3 8h9M3 10h9M3 12h9" strokeDasharray="1 1.500" />
  </svg>
);
const Funnel = () => (
  <svg width="24" height="24" viewBox="0 0 24 24" fill="#fff" stroke="#605e5c" strokeWidth="1.500">
    <path d="M1 2H23V5L14.500 13V22H9.500V13L1 5Z" />
  </svg>
);

/* trend series: envelope [x, high, low] joined by a seeded zig-zag */
const env = [
  [145, 617, 634], [200, 615, 634], [206, 612, 631], [215, 599, 624], [222, 592, 621], [240, 583, 619], [260, 583, 617],
  [280, 574, 613], [300, 576, 611], [315, 570, 610], [335, 574, 609], [346, 567, 610], [351, 588, 614], [357, 578, 604],
  [360, 557, 602], [368, 548, 592], [378, 542, 588], [396, 532, 580],
];
const seriesPath = (() => {
  let seed = 7;
  const rnd = () => (seed = (seed * 16807) % 2147483647) / 2147483647;
  let d = "";
  for (let x = 145, i = 0; x < 396; x += 0.9, i++) {
    const j = env.findIndex((e) => e[0] > x);
    const a = env[Math.max(j - 1, 0)];
    const b = env[Math.max(j, 1)];
    const t = (x - a[0]) / (b[0] - a[0]);
    const hi = a[1] + (b[1] - a[1]) * t;
    const lo = a[2] + (b[2] - a[2]) * t;
    const reach = (lo - hi) / 2.4;
    const y = i % 2 ? hi + rnd() * reach : lo - rnd() * 7;
    d += `${i ? "L" : "M"}${x.toFixed(1)} ${y.toFixed(1)}`;
  }
  return d;
})();

const Trend = () => (
  <svg width="300" height="198" viewBox="96 474 300 198">
    <g stroke="#c9c9c9" strokeDasharray="1 5" strokeWidth="1.500">
      <path d="M135 484H396M135 566H396M135 649H396M202 484V649M275 484V649M350 484V649" />
    </g>
    <path d={seriesPath} fill="none" stroke={TEAL} strokeWidth="1.900" strokeLinejoin="round" />
    <path d="M202 622V641M289 605V633M349 600V630L353 610M370 580V644" fill="none" stroke={TEAL} strokeWidth="2" />
    <path d="M145 629L158 627L200 626L206 627L213 624L222 613L232 608L242 604L258 604L275 600L290 601L304 599L315 595L332 597L348 596L353 601L358 603L362 599L367 588L374 579L384 573L396 563" fill="none" stroke="#7470ae" strokeWidth="3" strokeLinejoin="round" />
    <g textAnchor="end">
      <ChartText x="123" y="488">100</ChartText>
      <ChartText x="123" y="571">50</ChartText>
      <ChartText x="123" y="653">0</ChartText>
    </g>
    <g textAnchor="middle">
      <ChartText x="202" y="666">2018年1月</ChartText>
      <ChartText x="275" y="666">2018年7月</ChartText>
      <ChartText x="350" y="666">2019年1月</ChartText>
    </g>
  </svg>
);
const ChannelPie = () => (
  <svg width="418" height="224" viewBox="96 710 418 224">
    <circle cx="269.500" cy="820" r="82" fill="#008caf" />
    <path d="M269.500 738A82 82 0 0 1 263.500 902L269.500 820Z" fill="#006d6f" />
    <path d="M191 754H205L211 760M326 883L332 889H345" fill="none" stroke="#8db5b9" />
    <g textAnchor="end">
      <ChartText x="186" y="751">16.17 千</ChartText>
      <ChartText x="186" y="767">(48.80%)</ChartText>
    </g>
    <ChartText x="350" y="886">16.96 千</ChartText>
    <ChartText x="350" y="902">(51.20%)</ChartText>
  </svg>
);
const RegionPie = () => (
  <svg width="425" height="248" viewBox="522 686 425 248">
    <circle cx="736" cy="820" r="85" fill={TEAL} />
    <path d="M736 820L753 903A85 85 0 0 0 821 820Z" fill="#318a40" />
    <path d="M657 891H673L680 886" fill="none" stroke="#8db5b9" />
    <ChartText x="563" y="896">9959.6 (30.06%)</ChartText>
    <ChartText x="897" y="815">(46.7%)</ChartText>
  </svg>
);

type ToolDef = { i: string; l: string[]; more?: boolean; off?: boolean };
const groups: { name: string; w: number; gap: number; tools: ToolDef[] }[] = [
  {
    name: "数据", w: 592, gap: 8,
    tools: [
      { i: "getData", l: ["获取数据"], more: true },
      { i: "excel", l: ["Excel", "工作簿"] },
      { i: "onelake", l: ["OneLake", "数据中心"], more: true },
      { i: "sql", l: ["SQL", "Server"] },
      { i: "table", l: ["输入数据"] },
      { i: "dataverse", l: ["Dataverse"] },
      { i: "recent", l: ["最近使用的源"], more: true },
    ],
  },
  { name: "查询", w: 161, gap: 8, tools: [{ i: "transform", l: ["转换数据"], more: true }, { i: "refresh", l: ["刷新"] }] },
  {
    name: "插入", w: 312, gap: 6,
    tools: [{ i: "newVisual", l: ["新建视觉对象"] }, { i: "textbox", l: ["文本框"] }, { i: "moreVisual", l: ["更多视觉对象"], more: true }],
  },
  { name: "计算", w: 197, gap: 6, tools: [{ i: "calc", l: ["新建度量值"] }, { i: "quick", l: ["快度量值"] }] },
  { name: "敏感度", w: 85, gap: 6, tools: [{ i: "sensitivity", l: ["敏感度"], more: true, off: true }] },
  { name: "共享", w: 85, gap: 6, tools: [{ i: "publish", l: ["发布"] }] },
];

const Clip = ({ children }: { children: React.ReactNode }) => (
  <svg width="26" height="26" viewBox="0 0 26 26" fill="none" stroke={K} strokeWidth="1.500">{children}</svg>
);

export default function App() {
  return (
    <Shell>
      <Global />
      <TitleStrip />
      <Header>
        <Menu>
          {["主页", "插入", "建模", "视图", "优化", "帮助", "外部工具"].map((t, i) => (
            <MenuTab key={t} $on={i === 0}>{t}</MenuTab>
          ))}
          {["格式", "数据/钻取"].map((t) => (
            <MenuTab key={t} $ctx>{t}</MenuTab>
          ))}
          <ShareButton aria-label="共享">
            <svg width="26" height="26" viewBox="0 0 26 26" fill="none" stroke="#fff" strokeWidth="1.500">
              <path d="M2 6V23H20V19M6 17Q7 7 16 7V2L24 9L16 16V11Q10 11 6 17Z" />
            </svg>
          </ShareButton>
        </Menu>
        <Ribbon>
          <Group $w={179} $cut={90}>
            <ClipList>
              <ClipButton>
                <Clip><path d="M9 1L20 17M21 1L10 17" /><circle cx="9" cy="20" r="3" stroke="#2f86c6" /><circle cx="22" cy="20" r="3" stroke="#2f86c6" /></Clip>
                剪切
              </ClipButton>
              <ClipButton>
                <Clip><path d="M9 5H20L25 11V25H9ZM19 5V12H25M13 16H21M13 20H21M9 20H3V2H16" /></Clip>
                复制
              </ClipButton>
              <ClipButton>
                <Clip><path d="M14 11L21 18L15 25L3 17Z" fill="#ffd37a" stroke="#e07c10" /><path d="M13 9L22 18M14 9L18 6L23 1Q26 2 24 6L20 10L22 14" /></Clip>
                格式刷
              </ClipButton>
            </ClipList>
            <GroupName>剪贴板</GroupName>
          </Group>
          {groups.map((g) => (
            <Group key={g.name} $w={g.w}>
              <GroupBody $gap={g.gap}>
                {g.tools.map((t) => (
                  <Tool key={t.i} $off={t.off}>
                    {icons[t.i]}
                    {t.l.map((x, i) => (
                      <ToolLine key={x} $latin={/^[A-Z]/.test(x)}>
                        {x}
                        {t.more && i === 1 && <Chev s={10} />}
                      </ToolLine>
                    ))}
                    {t.more && t.l.length === 1 && <ToolLine><Chev c={t.off ? "#b0aeac" : K} /></ToolLine>}
                  </Tool>
                ))}
              </GroupBody>
              <GroupName>{g.name}</GroupName>
            </Group>
          ))}
        </Ribbon>
      </Header>

      <Body>
        <LeftSide>
          <Work>
            <Canvas>
              <SelectionDots />
              <CanvasRow>
                <Report>
                  <SideNav>
                    <SideTitle>收入分析</SideTitle>
                    {["整体收入", "趋势分析", "产品分析", "客户分析", "区域分析", "预算执行分析"].map((t, i) => (
                      <SideLink key={t} href="#" $on={i === 0}>{t}</SideLink>
                    ))}
                  </SideNav>
                  <Content>
                    <Filters>
                      <Slicer $w={247} $h={92} $c="#111">
                        <Dates>
                          <DateBox><input aria-label="开始日期" defaultValue="2017/8/18" /><Calendar /></DateBox>
                          <DateBox><input aria-label="结束日期" defaultValue="2020/11/13" /><Calendar /></DateBox>
                        </Dates>
                        <RangePair>
                          <RangeInput $track type="range" aria-label="开始" defaultValue={32} />
                          <RangeInput type="range" aria-label="结束" defaultValue={98} />
                        </RangePair>
                      </Slicer>
                      <Slicer $w={276} $gap={98} $top={1}>
                        <SlicerTitle htmlFor="cat">产品类别</SlicerTitle>
                        <SelectBox><select id="cat"><option>所有</option></select><WideChev /></SelectBox>
                      </Slicer>
                      <Slicer $w={274} $gap={45} $top={3}>
                        <SlicerTitle htmlFor="area">区域</SlicerTitle>
                        <SelectBox><select id="area"><option>所有</option></select><WideChev /></SelectBox>
                      </Slicer>
                      <Slicer $w={272} $gap={55}>
                        <SlicerTitle as="h3" $dark>单位</SlicerTitle>
                        <UnitButtons>
                          <UnitButton $on>万元</UnitButton>
                          <UnitButton>元</UnitButton>
                        </UnitButtons>
                      </Slicer>
                    </Filters>
                    <Lower>
                      <LeftCol>
                        <Cards>
                          <Card $w={145}><CardValue>0.45</CardValue><CardName>销售毛利率</CardName></Card>
                          <Card $w={127} $gap={1}><CardValue>33,129.76</CardValue><CardName>销售收入</CardName></Card>
                          <Card $w={127}><CardValue /><CardName>平均销售单价</CardName></Card>
                          <Card $w={127} $gap={3} />
                          <Card $w={308} $gap={1} $low />
                        </Cards>
                        <Panel $h={267}>
                          <TrendHead>
                            <TrendTitles>
                              <h3>销售趋势</h3>
                              <Legend>
                                <Dot $c={TEAL} />销售收入<Dot $c={PURPLE} $next />移动平均N天销售额
                              </Legend>
                            </TrendTitles>
                            <WindowBox>移动平均天数<input /></WindowBox>
                          </TrendHead>
                          <Trend />
                        </Panel>
                        <BottomRow>
                          <Panel $w={422} $h={255}>
                            <PanelTitle>渠道占比</PanelTitle>
                            <ChannelPie />
                          </Panel>
                          <Panel $w={428} $h={255}><RegionPie /></Panel>
                        </BottomRow>
                      </LeftCol>
                      <Province $w={415} $h={643}>
                        <ProvinceTitle>省市收入情况</ProvinceTitle>
                        <Tree n={greenMap} />
                      </Province>
                    </Lower>
                  </Content>
                </Report>
                <VScroll />
              </CanvasRow>
              <HScroll />

              <Selected>
                <SelectedTitle>收入分析_销售收入(按 省)</SelectedTitle>
                <Tree n={colorMap} />
                <Corner />
                <Corner $r />
                <Corner $b />
                <Corner $r $b />
                <Handle $x="m" $y="t" />
                <Handle $x="m" $y="b" />
                <Handle $x="l" $y="m" />
                <Handle $x="r" $y="m" />
                <VisualTools>
                  <VisualTool aria-label="筛选"><Funnel /></VisualTool>
                  <VisualTool aria-label="焦点模式">
                    <svg width="22" height="22" viewBox="0 0 22 22" fill="none" stroke="#605e5c" strokeWidth="1.400">
                      <path d="M9 2H1V20H21V13M1 13H9V20M12 10L21 2M14 2H21V9" />
                    </svg>
                  </VisualTool>
                  <VisualTool aria-label="更多选项">
                    <svg width="24" height="6" viewBox="0 0 24 6" fill="#605e5c">
                      <circle cx="3" cy="3" r="1.700" /><circle cx="12" cy="3" r="1.700" /><circle cx="21" cy="3" r="1.700" />
                    </svg>
                  </VisualTool>
                </VisualTools>
              </Selected>
              <Pointer width="22" height="30" viewBox="0 0 22 30">
                <path d="M2 1V23L7 18.500L11 27L15 25L11.500 17H19Z" fill="#fff" stroke="#222" />
              </Pointer>
              <Tooltip>
                <dt>省</dt><dd>浙江省</dd>
                <dt>收入分析_销售收入</dt><dd><b>2,667.19</b></dd>
              </Tooltip>
            </Canvas>
            <FilterStrip>
              <StripButton aria-label="展开">
                <svg width="20" height="20" viewBox="0 0 20 20" fill="none" stroke={K} strokeWidth="1.500">
                  <path d="M10 1L2 10L10 19M18 1L10 10L18 19" />
                </svg>
              </StripButton>
              <svg width="20" height="20" viewBox="0 0 20 20" fill="none" stroke={K} strokeWidth="1.500">
                <path d="M18 1V19H16L9 12.500H3V8H9L16 1Z" />
              </svg>
              <StripTitle>筛选器</StripTitle>
            </FilterStrip>
          </Work>
          <PageBar>
            <ViewButton $on aria-label="桌面布局">
              <svg width="24" height="24" viewBox="0 0 24 24" fill="none" stroke="#111" strokeWidth="1.800">
                <path d="M-4 5H19V19H-4M9 19V23M3 23H14" />
              </svg>
            </ViewButton>
            <ViewButton aria-label="移动布局">
              <svg width="20" height="32" viewBox="0 0 20 32" fill="none" stroke="#605e5c" strokeWidth="1.500">
                <rect x="1" y="1" width="18" height="29" rx="2" /><path d="M9 26H11" strokeWidth="2" />
              </svg>
            </ViewButton>
            <Step aria-label="上一页">
              <svg width="8" height="12" viewBox="0 0 8 12"><path d="M7 0V12L0 6Z" fill="#c8c6c4" /></svg>
            </Step>
            <Step aria-label="下一页">
              <svg width="8" height="12" viewBox="0 0 8 12"><path d="M1 0V12L8 6Z" fill="#c8c6c4" /></svg>
            </Step>
            {["整体收入", "趋势分析", "产品分析", "客户分析", "区域分析", "预算执行分析"].map((t, i) => (
              <PageTab key={t} $on={i === 0}>{t}</PageTab>
            ))}
            <AddPage aria-label="新建页">
              <svg width="18" height="18" viewBox="0 0 18 18" stroke="#fff" strokeWidth="3"><path d="M9 1V17M1 9H17" /></svg>
            </AddPage>
          </PageBar>
        </LeftSide>

        <Pane>
          <PaneTitle>可视化</PaneTitle>
          <PaneSub>生成视觉对象</PaneSub>
          <PaneTabs>
            <PaneTab $on aria-label="生成视觉对象">
              <svg width="38" height="40" viewBox="0 0 38 40">
                <path d="M1 3H30" stroke="#252423" strokeWidth="2" />
                <g fill={ACCENT} stroke="#1e2b2a" strokeWidth="1.800" strokeDasharray="2 2">
                  <rect x="2" y="10" width="34" height="11" /><rect x="2" y="26" width="34" height="11" />
                </g>
              </svg>
            </PaneTab>
            <PaneTab aria-label="设置视觉对象格式">
              <svg width="36" height="36" viewBox="0 0 36 36" fill="none" stroke={K} strokeWidth="1.700">
                <path d="M2 28V15H11M11 21V2H20V17M20 9H30M34 13Q26 15 16 25L20 29Q29 22 34 13ZM15 25Q10 26 10 31Q8 33 6 33Q16 37 20 29" />
              </svg>
            </PaneTab>
            <PaneTab aria-label="分析">
              <svg width="44" height="36" viewBox="0 0 44 36" fill="none" stroke={K} strokeWidth="1.700">
                <circle cx="21" cy="17" r="15" /><path d="M7 17L13 13L19 18L26 12L32 17M14 22V29M20 22V31M26 19V30" />
              </svg>
            </PaneTab>
          </PaneTabs>
          <svg width="240" height="20" viewBox="0 0 240 20" fill="none" stroke="#a19f9d">
            <path d="M0 18H24L36 6L48 18H240" />
          </svg>
          <VizGrid>
            {viz.map(([name, d]) => (
              <VizButton key={name} aria-label={name} $on={name === "树状图"}>
                <svg width="28" height="28" viewBox="0 0 28 28" fill="none" stroke={K} strokeWidth="1.300">{d}</svg>
              </VizButton>
            ))}
          </VizGrid>
          <Wells>
            <WellName>类别</WellName>
            <Well $full><Chip>省<WideChev c={K} /></Chip></Well>
            <WellName>详细信息</WellName>
            <Well>在此处添加数据字段</Well>
            <WellName>值</WellName>
            <Well $full><Chip>收入分析_销售收入<WideChev c={K} /></Chip></Well>
            <WellName>工具提示</WellName>
            <Well>在此处添加数据字段</Well>
          </Wells>
        </Pane>
      </Body>
      <Status>
        <span>6 页)</span>
        <Zoom>
          <ZoomButton aria-label="缩小">-</ZoomButton>
          <ZoomRange type="range" aria-label="缩放" defaultValue={38} />
          <ZoomButton aria-label="放大">+</ZoomButton>
          <ZoomText>80%</ZoomText>
        </Zoom>
      </Status>
    </Shell>
  );
}
